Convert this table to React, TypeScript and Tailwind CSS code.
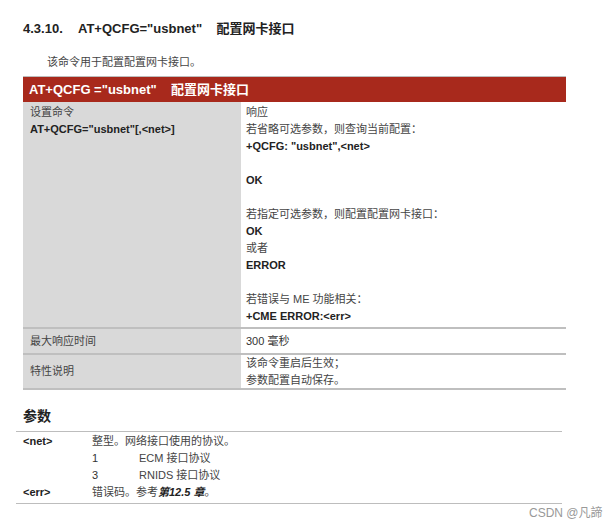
const font = { fontFamily: '"Liberation Sans", "Noto Sans CJK SC", sans-serif' };

const responseLines: { text: string; bold?: boolean }[] = [
  { text: "响应" },
  { text: "若省略可选参数，则查询当前配置：" },
  { text: '+QCFG: "usbnet",<net>', bold: true },
  { text: "" },
  { text: "OK", bold: true },
  { text: "" },
  { text: "若指定可选参数，则配置配置网卡接口：" },
  { text: "OK", bold: true },
  { text: "或者" },
  { text: "ERROR", bold: true },
  { text: "" },
  { text: "若错误与 ME 功能相关：" },
  { text: "+CME ERROR:<err>", bold: true },
];

const App = () => {
  return (
    <div className="w-[612px] h-[527px] bg-white relative text-[#333] overflow-hidden" style={font}>
      <div className="pt-[21px] pl-[23px]">
        <h3 className="flex text-[13px] font-bold leading-[16px] text-[#222]">
          <span className="w-[55px]">4.3.10.</span>
          <span>AT+QCFG="usbnet"&nbsp;&nbsp;&nbsp;&nbsp;配置网卡接口</span>
        </h3>
        <p className="mt-[17px] pl-[24px] text-[11px] leading-[16px] text-[#444]">该命令用于配置配置网卡接口。</p>
      </div>

      <div className="mt-[6px] ml-[23px] w-[543px] text-[11px]">
        <div className="h-px bg-[#bdbdbd]" />
        <div className="h-[25px] bg-[#a8291c] flex items-center pl-[6px] text-white text-[13px] font-bold">
          AT+QCFG ="usbnet"&nbsp;&nbsp;&nbsp;&nbsp;配置网卡接口
        </div>

        <div className="flex">
          <div className="w-[218px] bg-[#d9d9d9] pl-[7px] pt-[2px] leading-[17px]">
            <div className="text-[#444]">设置命令</div>
            <div className="font-bold text-[#222]">AT+QCFG="usbnet"[,&lt;net&gt;]</div>
          </div>
          <div className="flex-1 pl-[5px] pt-[2px] pb-[2px] leading-[17px]">
            {responseLines.map((line, i) => (
              <div key={i} className={line.bold ? "font-bold text-[#222] h-[17px]" : "text-[#444] h-[17px]"}>
                {line.text}
              </div>
            ))}
          </div>
        </div>
        <div className="h-[2px] bg-[#bfbfbf]" />

        <div className="flex h-[24px] items-stretch">
          <div className="w-[218px] bg-[#d9d9d9] pl-[7px] flex items-center text-[#444]">最大响应时间</div>
          <div className="flex-1 pl-[5px] flex items-center text-[#333]">300 毫秒</div>
        </div>
        <div className="h-[2px] bg-[#bfbfbf]" />

        <div className="flex h-[33px] items-stretch">
          <div className="w-[218px] bg-[#d9d9d9] pl-[7px] flex items-center text-[#444]">特性说明</div>
          <div className="flex-1 pl-[5px] flex flex-col justify-center leading-[17px] text-[#444]">
            <div>该命令重启后生效；</div>
            <div>参数配置自动保存。</div>
          </div>
        </div>
        <div className="h-[2px] bg-[#bfbfbf]" />
      </div>

      <div className="mt-[17px] pl-[23px] text-[14px] font-bold leading-[18px] text-[#222]">参数</div>

      <div className="mt-[6px] ml-[16px] w-[546px] border-t border-b border-[#bdbdbd] pt-[1px] pb-[2px] text-[11px] leading-[17px]">
        <div className="grid grid-cols-[69px_47px_1fr] pl-[7px]">
          <div className="font-bold text-[#222]">&lt;net&gt;</div>
          <div className="col-span-2 text-[#444]">整型。网络接口使用的协议。</div>
          <div />
          <div className="text-[#333]">1</div>
          <div className="text-[#444]">ECM 接口协议</div>
          <div />
          <div className="text-[#333]">3</div>
          <div className="text-[#444]">RNIDS 接口协议</div>
          <div className="font-bold text-[#222]">&lt;err&gt;</div>
          <div className="col-span-2 text-[#444]">
            错误码。参考<span className="font-bold italic text-[#222]">第12.5 章</span>。
          </div>
        </div>
      </div>

      <div className="absolute left-[529px] top-[505px] text-[12px] leading-[16px] text-[#999]">CSDN @凡諦</div>
    </div>
  );
};

export default App;
